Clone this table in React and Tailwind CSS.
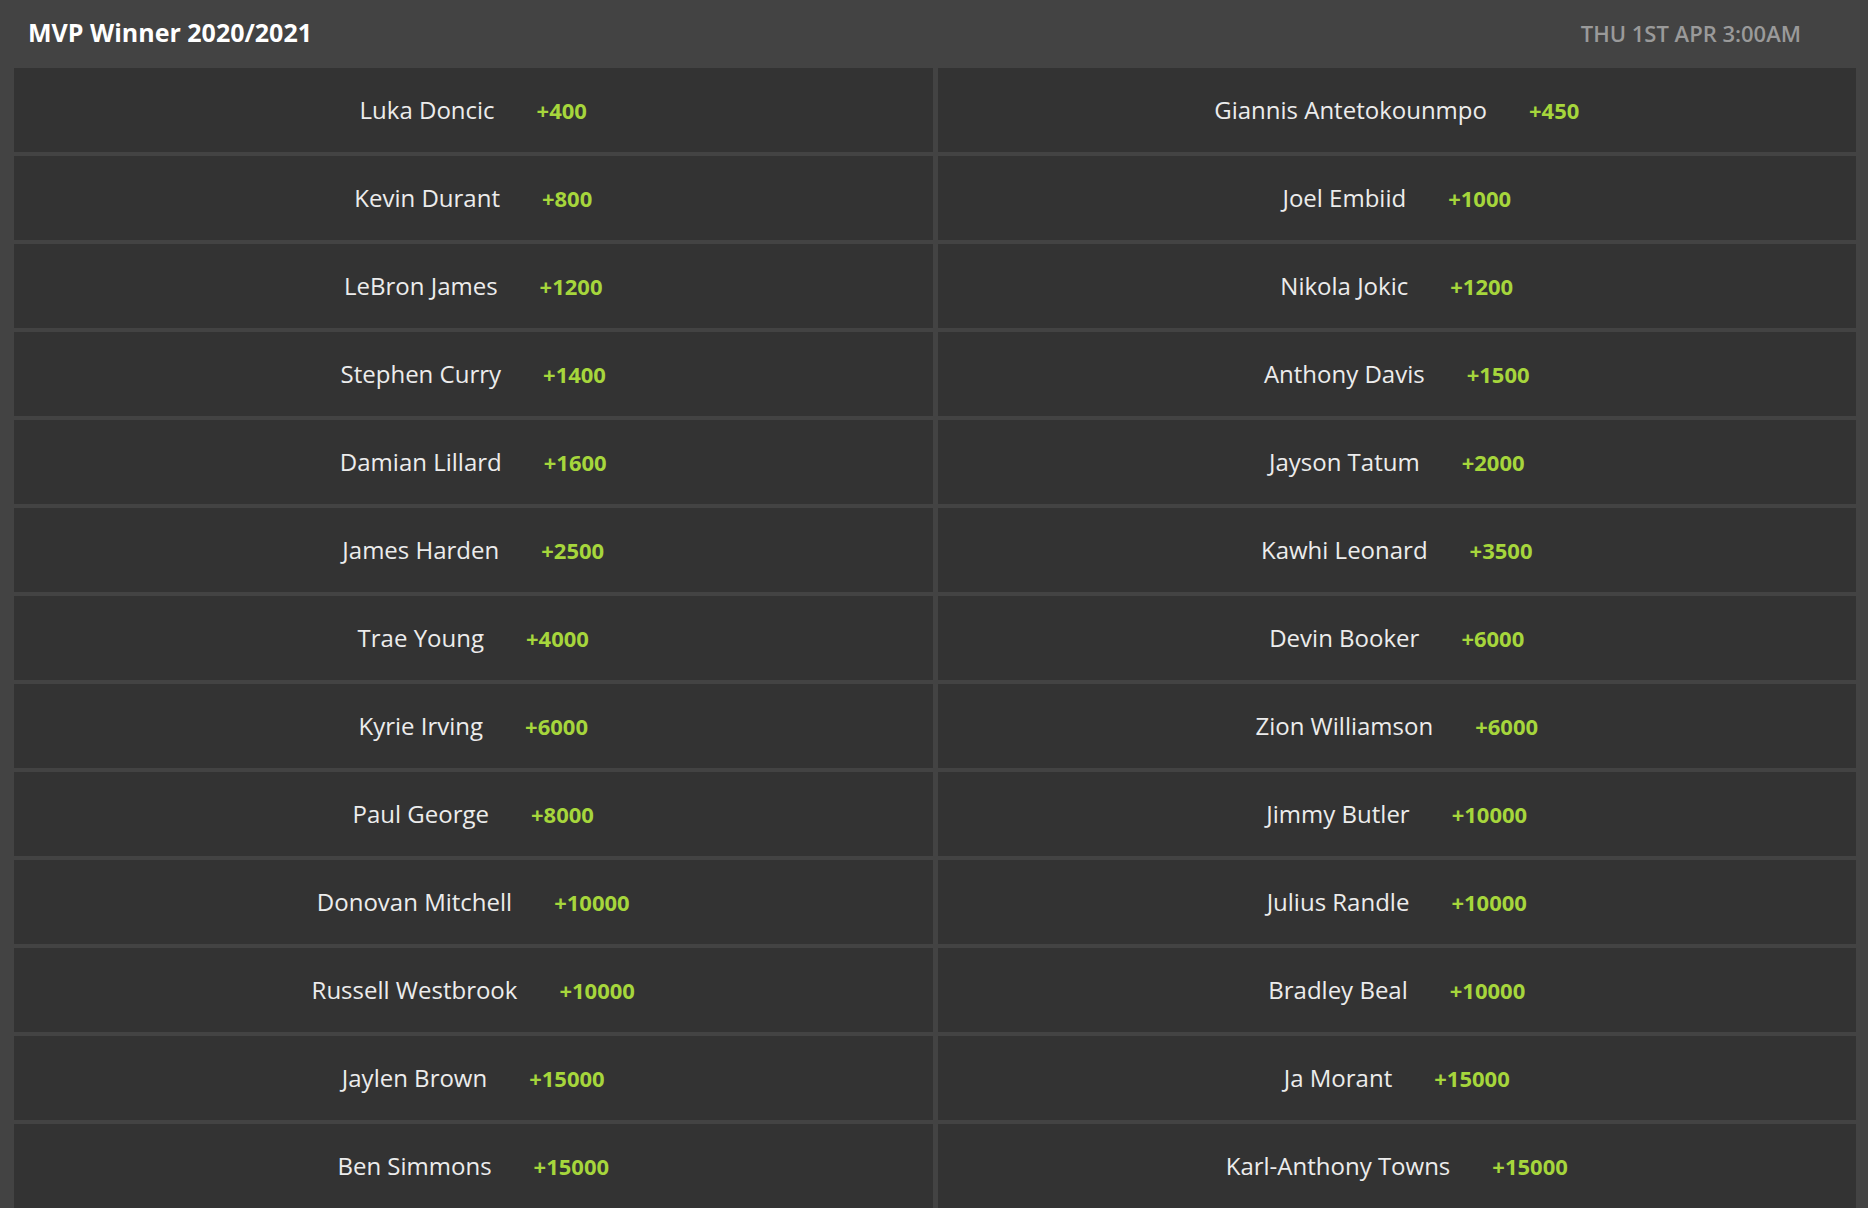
const rows = [
  ['Luka Doncic', '+400', 'Giannis Antetokounmpo', '+450'],
  ['Kevin Durant', '+800', 'Joel Embiid', '+1000'],
  ['LeBron James', '+1200', 'Nikola Jokic', '+1200'],
  ['Stephen Curry', '+1400', 'Anthony Davis', '+1500'],
  ['Damian Lillard', '+1600', 'Jayson Tatum', '+2000'],
  ['James Harden', '+2500', 'Kawhi Leonard', '+3500'],
  ['Trae Young', '+4000', 'Devin Booker', '+6000'],
  ['Kyrie Irving', '+6000', 'Zion Williamson', '+6000'],
  ['Paul George', '+8000', 'Jimmy Butler', '+10000'],
  ['Donovan Mitchell', '+10000', 'Julius Randle', '+10000'],
  ['Russell Westbrook', '+10000', 'Bradley Beal', '+10000'],
  ['Jaylen Brown', '+15000', 'Ja Morant', '+15000'],
  ['Ben Simmons', '+15000', 'Karl-Anthony Towns', '+15000'],
];

function Cell({ name, odds }) {
  return (
    <div className="h-[84px] bg-[#333333] flex items-center justify-center">
      <div className="flex items-baseline gap-[42px]">
        <span className="text-[24px] text-[#ececec]">{name}</span>
        <span className="text-[22px] font-bold text-[#a6d63c]">{odds}</span>
      </div>
    </div>
  );
}

export default function App() {
  return (
    <div
      className="w-full h-[1208px] overflow-hidden bg-[#434343]"
      style={{ fontFamily: '"Open Sans", "Noto Sans", sans-serif' }}
    >
      <div className="h-[68px] flex items-center justify-between pl-[28px] pr-[67px] pb-[2px]">
        <h1 className="text-[25px] font-bold text-white">MVP Winner 2020/2021</h1>
        <span className="text-[22px] font-semibold text-[#9a9a9a]">THU 1ST APR 3:00AM</span>
      </div>
      <div className="grid grid-cols-2 gap-x-[5px] gap-y-[4px] pl-[14px] pr-[12px]">
        {rows.map((r) => [
          <Cell key={r[0]} name={r[0]} odds={r[1]} />,
          <Cell key={r[2]} name={r[2]} odds={r[3]} />,
        ])}
      </div>
    </div>
  );
}
